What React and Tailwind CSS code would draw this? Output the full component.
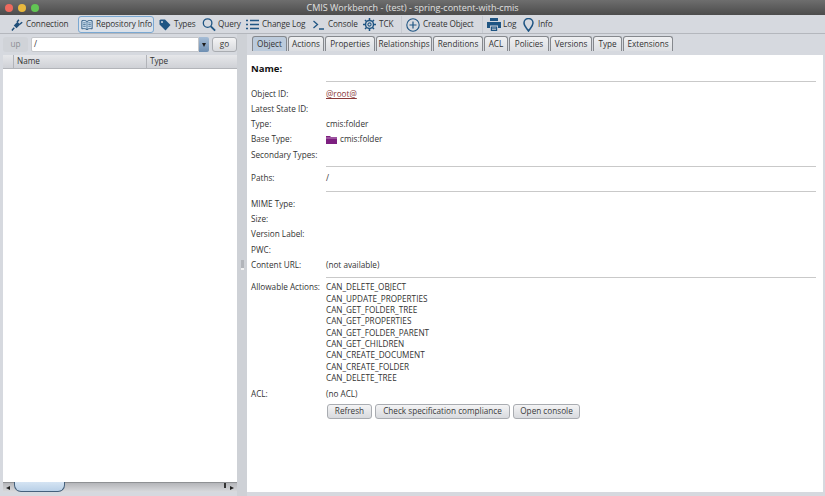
import React from "react";

const FONT = "font-['Open_Sans','Liberation_Sans',sans-serif]";

function PlugIcon() {
  return (
    <svg width="12" height="12" viewBox="0 0 13 13" className="shrink-0">
      <path d="M1 12.5 L3.5 9.5" stroke="#1f4f7a" strokeWidth="1.6" fill="none" />
      <path d="M3 7 L7 3 L10 6 L6 10 Z" fill="#1f4f7a" />
      <path d="M6.5 3.5 L8.5 0.8 M9.5 5.5 L12.2 3.5" stroke="#1f4f7a" strokeWidth="1.5" fill="none" />
    </svg>
  );
}

function BookIcon() {
  return (
    <svg width="12" height="12" viewBox="0 0 14 13" className="shrink-0" fill="none" stroke="#1f4f7a" strokeWidth="1">
      <path d="M7 2.5 C5.5 1 3 1 1 1.5 V11 C3 10.5 5.5 10.5 7 12 C8.5 10.5 11 10.5 13 11 V1.5 C11 1 8.5 1 7 2.5 Z" fill="#cfe0ef" />
      <path d="M7 2.5 V12 M2.5 4 H5.5 M2.5 6 H5.5 M2.5 8 H5.5 M8.5 4 H11.5 M8.5 6 H11.5 M8.5 8 H11.5" strokeWidth="0.8" />
    </svg>
  );
}

function TagIcon() {
  return (
    <svg width="12" height="12" viewBox="0 0 12 12" className="shrink-0">
      <path d="M0.5 1.5 L1.5 0.5 H6 L11.5 6 L6.5 11.5 L0.5 5.5 Z" fill="#1f5583" />
      <circle cx="3" cy="3" r="1" fill="#d6d9df" />
    </svg>
  );
}

function SearchIcon() {
  return (
    <svg width="14" height="15" viewBox="0 0 15 15" className="shrink-0" fill="none" stroke="#1f5583">
      <circle cx="6" cy="6" r="4.6" strokeWidth="1.4" />
      <path d="M9.5 9.5 L14 14" strokeWidth="2" />
    </svg>
  );
}

function ListIcon() {
  return (
    <svg width="13" height="11" viewBox="0 0 13 11" className="shrink-0" stroke="#1f5583" strokeWidth="1.3">
      <path d="M0 1.5 H2 M4 1.5 H13 M0 5.5 H2 M4 5.5 H13 M0 9.5 H2 M4 9.5 H13" />
    </svg>
  );
}

function PromptIcon() {
  return (
    <svg width="11" height="10" viewBox="0 0 11 10" className="shrink-0" fill="none" stroke="#1f5583" strokeWidth="1.3">
      <path d="M0.5 1 L4.5 4.5 L0.5 8 M6 9 H11" />
    </svg>
  );
}

function GearIcon() {
  return (
    <svg width="13" height="13" viewBox="0 0 13 13" className="shrink-0" fill="none" stroke="#1f5583">
      <circle cx="6.5" cy="6.5" r="4" strokeWidth="1.5" />
      <circle cx="6.5" cy="6.5" r="1.6" strokeWidth="1.1" />
      <path d="M6.5 0 V2 M6.5 11 V13 M0 6.5 H2 M11 6.5 H13 M2 2 L3.5 3.5 M9.5 9.5 L11 11 M11 2 L9.5 3.5 M3.5 9.5 L2 11" strokeWidth="1.5" />
    </svg>
  );
}

function PlusIcon() {
  return (
    <svg width="14" height="14" viewBox="0 0 14 14" className="shrink-0" fill="none" stroke="#1f5583">
      <circle cx="7" cy="7" r="6.2" strokeWidth="1.1" />
      <path d="M7 3.5 V10.5 M3.5 7 H10.5" strokeWidth="1.2" />
    </svg>
  );
}

function PrinterIcon() {
  return (
    <svg width="14" height="13" viewBox="0 0 14 13" className="shrink-0">
      <path d="M3 0 H11 V3 H3 Z M0 4 H14 V10 H11 V7.5 H3 V10 H0 Z" fill="#1f5583" />
      <path d="M3.8 8.5 H10.2 V13 H3.8 Z" fill="#1f5583" />
      <path d="M5 10 H9 M5 11.5 H9" stroke="#d6d9df" strokeWidth="0.7" />
    </svg>
  );
}

function PinIcon() {
  return (
    <svg width="11" height="14" viewBox="0 0 11 14" className="shrink-0" fill="none" stroke="#1f5583" strokeWidth="1.5">
      <path d="M5.5 13 C3.5 10 1 7.8 1 5 A4.5 4.5 0 0 1 10 5 C10 7.8 7.5 10 5.5 13 Z" />
    </svg>
  );
}

function FolderIcon() {
  return (
    <svg width="11" height="8" viewBox="0 0 11 8" className="shrink-0">
      <path d="M0 0 H4 L5 1 H11 V8 H0 Z" fill="#7d1f80" />
      <path d="M0 2 H11" stroke="#d9b8da" strokeWidth="0.7" />
    </svg>
  );
}

function ToolItem({ icon, label, className = "" }) {
  return (
    <div className={`flex items-center h-[17px] whitespace-nowrap ${className}`}>
      {icon}
      <span>{label}</span>
    </div>
  );
}

function ToolSep() {
  return <div className="w-px h-[17px] bg-[#c6cad1]" />;
}

const TABS = [
  ["Object", "w-[35px]"],
  ["Actions", "w-[36px]"],
  ["Properties", "w-[50px]"],
  ["Relationships", "w-[56px]"],
  ["Renditions", "w-[50px]"],
  ["ACL", "w-[24px]"],
  ["Policies", "w-[40px]"],
  ["Versions", "w-[42px]"],
  ["Type", "w-[29px]"],
  ["Extensions", "w-[50px]"],
];

const ACTIONS = [
  "CAN_DELETE_OBJECT",
  "CAN_UPDATE_PROPERTIES",
  "CAN_GET_FOLDER_TREE",
  "CAN_GET_PROPERTIES",
  "CAN_GET_FOLDER_PARENT",
  "CAN_GET_CHILDREN",
  "CAN_CREATE_DOCUMENT",
  "CAN_CREATE_FOLDER",
  "CAN_DELETE_TREE",
];

function Row({ label, children, h = "h-[15.3px]" }) {
  return (
    <div className={`flex items-center ${h}`}>
      <div className="w-[75px] shrink-0 whitespace-nowrap">{label}</div>
      <div className="flex items-center gap-[3px] whitespace-nowrap">{children}</div>
    </div>
  );
}

function Sep({ mt, mb }) {
  return <div className={`h-px ml-[75px] mr-[7px] bg-[#c9c9c9] ${mt} ${mb}`} />;
}

function MacButton({ children, className = "" }) {
  return (
    <div className={`h-[15px] flex items-center justify-center rounded-[3px] border border-[#a9acb1] bg-linear-to-b from-[#f4f4f5] to-[#d8dade] text-[#3a3a3a] whitespace-nowrap ${className}`}>
      {children}
    </div>
  );
}

export default function App() {
  return (
    <div className={`w-[825px] h-[496px] overflow-hidden flex flex-col bg-[#d6d9df] text-[8.2px] leading-none text-[#333] ${FONT}`}>
      {/* title bar */}
      <div className="relative h-[15px] shrink-0 bg-linear-to-b from-[#6e6e6e] to-[#4c4c4c] flex items-center justify-center text-[#e0e0e0] text-[9px]">
        <div className="absolute left-[5px] top-[4px] flex gap-[5px]">
          <div className="w-2 h-2 rounded-full bg-[#ed6a5e]" />
          <div className="w-2 h-2 rounded-full bg-[#e9b93e]" />
          <div className="w-2 h-2 rounded-full bg-[#62c554]" />
        </div>
        CMIS Workbench - (test) - spring-content-with-cmis
      </div>

      {/* toolbar */}
      <div className="h-[19px] shrink-0 flex items-center border-b border-[#b4b7bd] pl-[11px] pt-px tracking-[-0.12px]">
        <ToolItem icon={<PlugIcon />} label="Connection" className="w-[67px] gap-[3px]" />
        <ToolItem
          icon={<BookIcon />}
          label="Repository Info"
          className="w-[76px] gap-[3px] pl-[2px] rounded-[3px] border-[1.5px] border-[#7aa8d2] bg-[#dbe1e9]"
        />
        <ToolItem icon={<TagIcon />} label="Types" className="w-[43px] ml-[5px] gap-[3px]" />
        <ToolItem icon={<SearchIcon />} label="Query" className="w-[44px] gap-[2px]" />
        <ToolItem icon={<ListIcon />} label="Change Log" className="w-[67px] gap-[3px]" />
        <ToolItem icon={<PromptIcon />} label="Console" className="w-[50px] gap-[4px]" />
        <ToolItem icon={<GearIcon />} label="TCK" className="w-[38px] gap-[3px]" />
        <ToolSep />
        <ToolItem icon={<PlusIcon />} label="Create Object" className="w-[76px] ml-[4px] gap-[3px]" />
        <ToolSep />
        <ToolItem icon={<PrinterIcon />} label="Log" className="w-[36px] ml-[4px] gap-[2px]" />
        <ToolItem icon={<PinIcon />} label="Info" className="gap-[4px]" />
      </div>

      <div className="flex-1 min-h-0 flex">
        {/* left column */}
        <div className="w-[237px] shrink-0 flex flex-col pl-[3px] pb-[4px]">
          <div className="h-[21px] shrink-0 flex items-center">
            <div className="w-[25px] h-[15px] flex items-center justify-center rounded-[3px] bg-[#d0d3d8] text-[#8b8e93]">up</div>
            <div className="ml-[3px] w-[168px] h-[15px] flex items-center pl-[2px] rounded-l-[2px] bg-white border border-[#c4c6ca]">/</div>
            <div className="w-[10px] h-[15px] flex items-center justify-center rounded-r-[2px] bg-linear-to-b from-[#a6bdd6] to-[#6e8fb2]">
              <div className="w-0 h-0 border-x-[2.5px] border-x-transparent border-t-[4px] border-t-[#1c1c1c]" />
            </div>
            <MacButton className="ml-[3px] w-[25px]">go</MacButton>
          </div>

          <div className="flex-1 min-h-0 flex flex-col bg-white">
            <div className="h-[14px] shrink-0 flex items-center bg-linear-to-b from-[#e6e7ea] to-[#cfd1d6] border-b border-[#b2b4b9]">
              <div className="w-[11px] h-full border-r border-[#b2b4b9]" />
              <div className="w-[133px] h-full flex items-center pl-[3px] border-r border-[#b2b4b9]">Name</div>
              <div className="pl-[3px]">Type</div>
            </div>
            <div className="flex-1" />
            {/* horizontal scrollbar */}
            <div className="relative h-[10px] shrink-0 bg-linear-to-b from-[#b4b5b9] to-[#dadbde] border-t border-[#8f9194] flex items-center justify-between px-[3px]">
              <div className="w-0 h-0 border-y-[2.5px] border-y-transparent border-r-[4px] border-r-[#222]" />
              <div className="absolute left-[11px] top-[-1px] w-[51px] h-[10px] rounded-b-[7px] border border-t-0 border-[#44607c] bg-linear-to-b from-[#d5e4f3] to-[#b9d0e7]" />
              <div className="absolute right-[11px] top-0 w-[2px] h-[5px] bg-[#333]" />
              <div className="w-0 h-0 border-y-[2.5px] border-y-transparent border-l-[4px] border-l-[#222]" />
            </div>
          </div>
        </div>

        {/* split divider */}
        <div className="w-[10px] shrink-0 flex items-center justify-center bg-[#ced1d6]">
          <div className="w-[3px] h-[10px] bg-[#b2b5ba] border-b-2 border-[#f2f2f2]" />
        </div>

        {/* right column */}
        <div className="flex-1 min-w-0 flex flex-col pr-[2px] pb-[4px]">
          <div className="h-[21px] shrink-0 flex items-end pl-[5px] pb-[4px] gap-px">
            {TABS.map(([name, w], i) => (
              <div
                key={name}
                className={`${w} h-[15px] flex items-center justify-center rounded-t-[3px] border border-b-0 border-[#85888d] whitespace-nowrap ${i === 0 ? "bg-[#bccbdc]" : "bg-linear-to-b from-[#eff0f2] to-[#dcdee2]"}`}
              >
                {name}
              </div>
            ))}
          </div>

          <div className="flex-1 min-h-0 bg-white pl-[4px] pt-[7px]">
            <div className="h-[13px] flex items-center text-[9.5px] font-bold text-[#111]">Name:</div>
            <Sep mt="mt-[6px]" mb="mb-[4px]" />
            <Row label="Object ID:">
              <span className="text-[#8a3a3a] underline">@root@</span>
            </Row>
            <Row label="Latest State ID:" />
            <Row label="Type:">cmis:folder</Row>
            <Row label="Base Type:">
              <FolderIcon />
              cmis:folder
            </Row>
            <Row label="Secondary Types:" />
            <Sep mt="mt-[4px]" mb="mb-[3px]" />
            <Row label="Paths:">/</Row>
            <Sep mt="mt-[5px]" mb="mb-[4.5px]" />
            <Row label="MIME Type:" />
            <Row label="Size:" />
            <Row label="Version Label:" />
            <Row label="PWC:" />
            <Row label="Content URL:">(not available)</Row>
            <Sep mt="mt-[4px]" mb="mb-[4px]" />
            <div className="flex">
              <div className="w-[75px] shrink-0 h-[11.33px] flex items-center">Allowable Actions:</div>
              <div className="flex flex-col">
                {ACTIONS.map((a) => (
                  <div key={a} className="h-[11.33px] flex items-center">{a}</div>
                ))}
              </div>
            </div>
            <div className="mt-[5px]">
              <Row label="ACL:" h="h-[11px]">(no ACL)</Row>
            </div>
            <div className="flex gap-[3px] ml-[76px] mt-[4px]">
              <MacButton className="w-[45px]">Refresh</MacButton>
              <MacButton className="w-[135px]">Check specification compliance</MacButton>
              <MacButton className="w-[67px]">Open console</MacButton>
            </div>
          </div>
        </div>
      </div>
    </div>
  );
}
